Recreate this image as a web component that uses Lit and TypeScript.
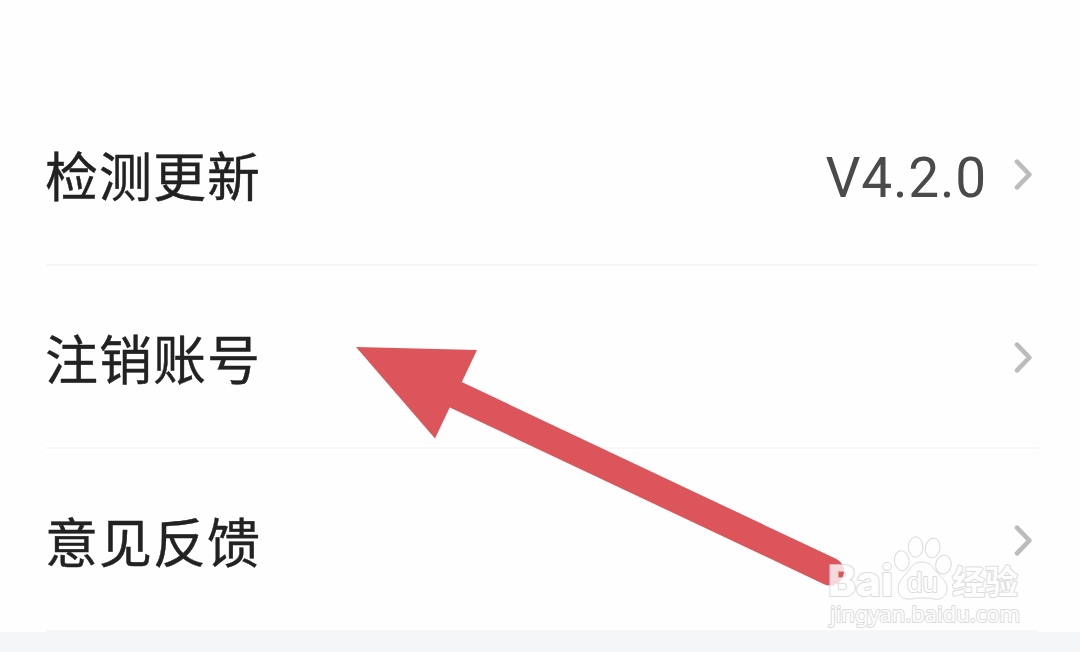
import { LitElement, html, svg, css, nothing } from 'lit';
import { customElement, property } from 'lit/decorators.js';

interface Item {
  label: string;
  value?: string;
}

const ITEMS: Item[] = [
  { label: '检测更新', value: 'V4.2.0' },
  { label: '注销账号' },
  { label: '意见反馈' },
];

@customElement('settings-row')
class SettingsRow extends LitElement {
  @property() label = '';
  @property() value = '';

  render() {
    return html`
      <span class="label">${this.label}</span>
      ${this.value ? html`<span class="value">${this.value}</span>` : nothing}
      <svg class="chevron" width="18" height="32" viewBox="0 0 18 32">
        <path d="M3 3.700 15.400 16.500 3 29.300" />
      </svg>
    `;
  }

  static styles = css`
    :host {
      display: flex;
      align-items: center;
      box-sizing: border-box;
      height: 183px;
      padding-right: 6px;
      border-bottom: 2px solid #f7f7f7;
    }
    .label {
      flex: 1;
      margin-left: -1px;
      font-size: 53px;
      line-height: 80px;
      letter-spacing: 1px;
      color: #222;
      -webkit-text-stroke: 0.4px #222;
    }
    .value {
      margin-right: 27px;
      padding-top: 9px;
      font-family: Roboto, sans-serif;
      font-size: 55px;
      line-height: 80px;
      letter-spacing: 0.8px;
      color: #4a4a4a;
    }
    .chevron {
      fill: none;
      stroke: #bcbcbc;
      stroke-width: 4.6;
      stroke-linecap: round;
      stroke-linejoin: round;
    }
  `;
}

@customElement('baidu-watermark')
class BaiduWatermark extends LitElement {
  _paw() {
    return svg`
      <ellipse cx="77.700" cy="34.700" rx="7.3" ry="10" transform="rotate(-6 77.700 34.700)" />
      <ellipse cx="91.700" cy="21" rx="7.3" ry="10.200" />
      <ellipse cx="108.700" cy="22" rx="7.3" ry="9.800" transform="rotate(10 108.700 22)" />
      <ellipse cx="119.500" cy="38.600" rx="7.8" ry="9.500" transform="rotate(10 119.500 38.600)" />
      <path d="M98 36C92 36 88 39 85 44C82 49 74 54 74 63C74 70 80 74 87 73C94 71.500 103 71.500 110 73C117 74.500 123 70 123 63C123 54 115 50 111 44C108 39 104 36 98 36Z" />
    `;
  }

  render() {
    return html`
      <svg width="204" height="104" viewBox="0 0 204 104">
        <g class="paw">${this._paw()}</g>
        <text class="latin" x="4" y="69.500" textLength="65" lengthAdjust="spacingAndGlyphs">Bai</text>
        <text class="du" x="83" y="65.500" textLength="31" lengthAdjust="spacingAndGlyphs">du</text>
        <text class="cjk" x="128" y="67.500" textLength="66" lengthAdjust="spacingAndGlyphs">经验</text>
        <text class="url" x="6" y="95.500" textLength="190" lengthAdjust="spacingAndGlyphs">jingyan.baidu.com</text>
      </svg>
    `;
  }

  static styles = css`
    svg {
      display: block;
      overflow: visible;
      opacity: 0.78;
      fill: #fff;
      stroke: #d2d2d2;
      stroke-width: 1;
    }
    text {
      paint-order: stroke;
      stroke-width: 2;
      stroke-linejoin: round;
    }
    .latin {
      font-family: Inter, sans-serif;
      font-size: 42px;
      font-weight: 800;
    }
    .du {
      font-family: 'Liberation Sans', sans-serif;
      font-size: 27px;
      font-weight: 400;
    }
    .cjk {
      font-family: 'Noto Sans CJK SC', sans-serif;
      font-size: 33px;
      font-weight: 700;
    }
    .url {
      font-family: 'Noto Sans', 'Open Sans', sans-serif;
      font-size: 22px;
    }
  `;
}

@customElement('app-root')
class AppRoot extends LitElement {
  render() {
    return html`
      <main class="list">
        ${ITEMS.map((i) => html`<settings-row .label=${i.label} .value=${i.value ?? ''}></settings-row>`)}
      </main>
      <div class="footer"></div>
      <svg class="arrow" width="1080" height="652" viewBox="0 0 1080 652">
        <path class="shaft" d="M450 392 830 571.500" />
        <path class="head" d="M356 347 477 350 435 438.500Z" />
      </svg>
      <baidu-watermark class="watermark"></baidu-watermark>
    `;
  }

  static styles = css`
    :host {
      display: flex;
      flex-direction: column;
      position: relative;
      box-sizing: border-box;
      height: 652px;
      padding-top: 83px;
      overflow: hidden;
      background: #fefefe;
      font-family: 'Noto Sans CJK SC', sans-serif;
    }
    .list {
      padding: 0 42px 0 46px;
    }
    .footer {
      flex: 1;
      background: #f5f6f8;
    }
    .arrow {
      position: absolute;
      inset: 0;
    }
    .shaft {
      stroke: #db555b;
      stroke-width: 28;
      stroke-linecap: round;
    }
    .head {
      fill: #db555b;
    }
    .watermark {
      position: absolute;
      left: 824px;
      top: 526px;
    }
  `;
}
